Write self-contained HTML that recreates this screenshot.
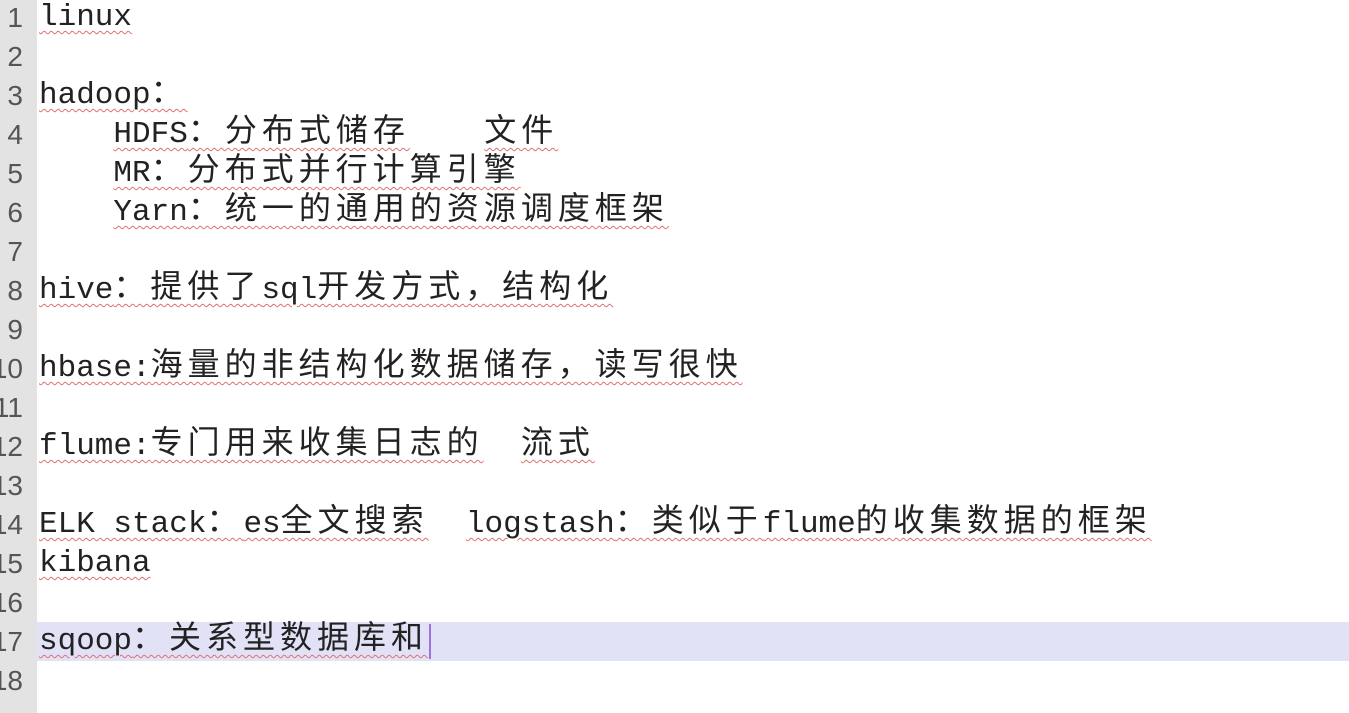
<!DOCTYPE html>
<html><head><meta charset="utf-8"><style>
html,body{margin:0;padding:0;width:1349px;height:713px;overflow:hidden;background:#fff;}
.g{position:absolute;left:0;top:0;width:37px;height:713px;background:#e3e3e3;}
.n{position:absolute;left:-10px;width:33px;text-align:right;font-family:"Liberation Sans",sans-serif;font-size:28px;color:#555;height:39px;line-height:39px;overflow:hidden;}
.l{position:absolute;left:39px;height:39px;line-height:39px;font-family:"Liberation Mono","Noto Sans CJK SC",monospace;font-size:31px;color:#222;white-space:pre;}
.c{font-family:"Noto Sans CJK SC",sans-serif;font-size:32px;letter-spacing:5px;line-height:0;vertical-align:1px;}
u{text-decoration:underline wavy #e07070;text-decoration-thickness:1px;text-underline-offset:5px;}
.hl{position:absolute;left:37px;right:0;top:622px;height:39px;background:#e2e2f7;}
.cur{position:absolute;left:429px;top:624px;width:2px;height:35px;background:#a070e0;}
</style></head><body>
<div class="g"></div>
<div class="hl"></div>
<div class="n" style="top:-2px">1</div>
<div class="n" style="top:37px">2</div>
<div class="n" style="top:76px">3</div>
<div class="n" style="top:115px">4</div>
<div class="n" style="top:154px">5</div>
<div class="n" style="top:193px">6</div>
<div class="n" style="top:232px">7</div>
<div class="n" style="top:271px">8</div>
<div class="n" style="top:310px">9</div>
<div class="n" style="top:349px">10</div>
<div class="n" style="top:388px">11</div>
<div class="n" style="top:427px">12</div>
<div class="n" style="top:466px">13</div>
<div class="n" style="top:505px">14</div>
<div class="n" style="top:544px">15</div>
<div class="n" style="top:583px">16</div>
<div class="n" style="top:622px">17</div>
<div class="n" style="top:661px">18</div>

<div class="l" style="top:-2px"><u>linux</u></div>
<div class="l" style="top:76px"><u>hadoop<span class="c">：</span></u></div>
<div class="l" style="top:115px">    <u>HDFS<span class="c">：分布式储存</span></u>    <u><span class="c">文件</span></u></div>
<div class="l" style="top:154px">    <u>MR<span class="c">：分布式并行计算引擎</span></u></div>
<div class="l" style="top:193px">    <u>Yarn<span class="c">：统一的通用的资源调度框架</span></u></div>
<div class="l" style="top:271px"><u>hive<span class="c">：提供了</span>sql<span class="c">开发方式，结构化</span></u></div>
<div class="l" style="top:349px"><u>hbase:<span class="c">海量的非结构化数据储存，读写很快</span></u></div>
<div class="l" style="top:427px"><u>flume:<span class="c">专门用来收集日志的</span></u>  <u><span class="c">流式</span></u></div>
<div class="l" style="top:505px"><u>ELK stack<span class="c">：</span>es<span class="c">全文搜索</span></u>  <u>logstash<span class="c">：类似于</span>flume<span class="c">的收集数据的框架</span></u></div>
<div class="l" style="top:544px"><u>kibana</u></div>
<div class="l" style="top:622px"><u>sqoop<span class="c">：关系型数据库和</span></u></div>
<div class="cur"></div>
</body></html>
